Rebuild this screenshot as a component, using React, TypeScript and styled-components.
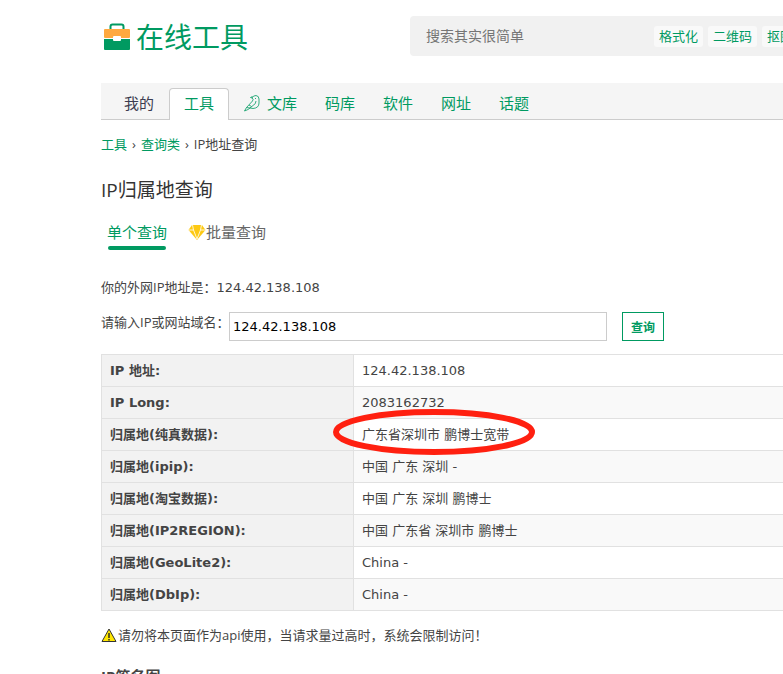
import React from "react";
import styled, { createGlobalStyle, css } from "styled-components";

const sans = `"Open Sans", "Noto Sans CJK SC", sans-serif`;
const wide = `"DejaVu Sans", "Noto Sans CJK SC", sans-serif`;
const green = "#009a61";

const GlobalStyle = createGlobalStyle`
  * { box-sizing: border-box; }
  body { margin: 0; background: #fff; color: #444; font: 13px/20px ${wide}; overflow-x: hidden; }
  #root { height: 100vh; overflow: hidden; }
  a { color: ${green}; text-decoration: none; }
  button, input { font-family: inherit; }
`;

const Page = styled.div`
  padding-left: 101px;
`;

const Header = styled.header`
  display: flex;
  align-items: center;
  height: 83px;
  padding-bottom: 11px;
`;

const Logo = styled.a`
  display: flex;
  flex: none;
  align-items: center;
  gap: 5px;
  width: 309px;
  padding: 2px 0 0 2px;
  font: 28px/36px ${sans};
  white-space: nowrap;
`;

const SearchBar = styled.form`
  display: flex;
  flex: 1;
  align-items: center;
  gap: 5px;
  min-width: 0;
  height: 40px;
  padding-left: 16px;
  border-radius: 4px 0 0 4px;
  background: #f1f1f1;
  overflow: hidden;
`;

const SearchInput = styled.input`
  flex: none;
  width: 223px;
  padding: 0;
  border: 0;
  outline: 0;
  background: transparent;
  font: 14px/20px ${sans};
  &::placeholder { color: #757575; opacity: 1; }
`;

const Chip = styled.a`
  flex: none;
  padding: 0 5px;
  border-radius: 3px;
  background: #f9f9f9;
  font: 13px/21px ${sans};
`;

const Nav = styled.nav`
  display: flex;
  align-items: flex-end;
  height: 37px;
  padding-left: 9px;
  border-bottom: 1px solid #ccc;
  background: #f5f5f5;
`;

const Tab = styled.a<{ $active?: boolean; $dark?: boolean }>`
  display: flex;
  align-items: center;
  gap: 6px;
  height: 32px;
  margin-bottom: -1px;
  padding: 0 13px 3px;
  border: 1px solid transparent;
  border-bottom: 0;
  border-radius: 4px 4px 0 0;
  font: 15px/28px ${sans};
  white-space: nowrap;
  ${(p) => p.$dark && css`color: #3c3c50;`}
  ${(p) => p.$active && css`
    margin-left: 1px;
    padding: 0 14px 3px;
    border-color: #ccc;
    background: #fff;
  `}
`;

const Crumbs = styled.nav`
  display: flex;
  gap: 5px;
  margin-top: 14px;
  font: 13px/20px ${sans};
`;

const Title = styled.h1`
  margin: 22px 0 0;
  color: #333;
  font: 19px/28px ${sans};
`;

const Modes = styled.div`
  display: flex;
  gap: 21px;
  margin-top: 16px;
  padding-left: 6px;
`;

const Mode = styled.button<{ $active?: boolean }>`
  position: relative;
  display: flex;
  align-items: center;
  height: 30px;
  padding: 0 0 6px;
  border: 0;
  background: transparent;
  color: ${(p) => (p.$active ? green : "#666")};
  font: 15px/22px ${sans};
  ${(p) => p.$active && css`
    &::after {
      content: "";
      position: absolute;
      left: 1px;
      right: 1px;
      bottom: 0;
      height: 4px;
      border-radius: 2px;
      background: ${green};
    }
  `}
`;

const Line = styled.p`
  margin: 27px 0 0;
  span { font-family: ${sans}; }
`;

const QueryForm = styled.form`
  display: flex;
  margin-top: 14px;
  label { width: 128px; font-family: ${sans}; white-space: nowrap; }
`;

const AddressInput = styled.input`
  width: 378px;
  height: 29px;
  padding: 0 3px;
  border: 1px solid #ccc;
  color: #000;
  font-size: 13px;
`;

const QueryButton = styled.button`
  width: 42px;
  height: 29px;
  margin-left: 15px;
  padding: 0;
  border: 1px solid ${green};
  background: #fff;
  color: ${green};
  font-size: 12px;
  font-weight: bold;
`;

const Table = styled.table`
  width: 100%;
  margin-top: 13px;
  border-collapse: collapse;
  table-layout: fixed;
  tr:nth-child(even) { background: #f9f9f9; }
  th, td {
    height: 32px;
    padding: 0 8px;
    border: 1px solid #e1e1e1;
    line-height: 20px;
    text-align: left;
  }
  th { width: 252px; background: #f2f2f2; }
  td { position: relative; border-right: 0; }
`;

const Ring = styled.svg`
  position: absolute;
  left: -21px;
  top: -10px;
  pointer-events: none;
`;

const Warning = styled.p`
  display: flex;
  align-items: center;
  gap: 1px;
  margin: 14px 0 0;
  font-family: ${sans};
`;

const Subtitle = styled.h2`
  margin: 19px 0 0;
  font: bold 15px/24px ${sans};
`;

const Briefcase = () => (
  <svg width="28" height="28" viewBox="0 0 28 28" aria-hidden="true">
    <path d="M7.5 7V3.5Q7.5 1.5 9.5 1.5H18.5Q20.5 1.5 20.5 3.5V7" fill="none" stroke={green} strokeWidth="2" />
    <rect x="1" y="6" width="26" height="9" rx="1" fill="#ffa940" />
    <path d="M1 16H27V26Q27 27 26 27H2Q1 27 1 26Z" fill={green} />
    <rect x="10" y="13" width="8" height="5" rx="1" fill="#fff" />
  </svg>
);

const Bird = () => (
  <svg width="18" height="18" viewBox="0 0 18 18" fill="none" stroke={green} strokeWidth="0.8" aria-hidden="true">
    <path d="M9 4Q10 1.5 13 1.5Q16 2 16 5V9Q16 14 10 14.5L7 14" />
    <path d="M9 4Q11 5 9.5 7L3.5 13.5L1.5 17L5 15.5L7 14L10 11.5Q13 10 13 7" />
    <path d="M9 4L7.5 3.5L9.5 2.5M12.5 4V5M3.5 13.5L7 14M6 11L8.5 12.5" />
  </svg>
);

const Gem = () => (
  <svg width="18" height="18" viewBox="0 0 18 18" aria-hidden="true">
    <path d="M4 2H14L17.5 7L9 17L0.5 7Z" fill="#fdc913" />
    <path d="M4.5 2L5.5 7L9 16L12.5 7L13.5 2M1 7H5.5M12.5 7H17" fill="none" stroke="#fff" strokeWidth="0.8" />
  </svg>
);

const Alert = () => (
  <svg width="16" height="16" viewBox="0 0 16 16" aria-hidden="true">
    <path d="M8 2L15 14.5H1Z" fill="#ffe600" stroke="#333" strokeWidth="1" strokeLinejoin="round" />
    <path d="M8 6V11M8 12V13.5" stroke="#222" strokeWidth="1.4" />
  </svg>
);

const rows = [
  ["IP 地址:", "124.42.138.108"],
  ["IP Long:", "2083162732"],
  ["归属地(纯真数据):", "广东省深圳市 鹏博士宽带"],
  ["归属地(ipip):", "中国 广东 深圳 -"],
  ["归属地(淘宝数据):", "中国 广东 深圳 鹏博士"],
  ["归属地(IP2REGION):", "中国 广东省 深圳市 鹏博士"],
  ["归属地(GeoLite2):", "China -"],
  ["归属地(DbIp):", "China -"],
];

export default function App() {
  return (
    <>
      <GlobalStyle />
      <Page>
        <Header>
          <Logo href="#"><Briefcase />在线工具</Logo>
          <SearchBar>
            <SearchInput aria-label="搜索" placeholder="搜索其实很简单" />
            <Chip href="#">格式化</Chip>
            <Chip href="#">二维码</Chip>
            <Chip href="#">抠图</Chip>
          </SearchBar>
        </Header>
        <Nav>
          <Tab href="#" $dark>我的</Tab>
          <Tab href="#" $active>工具</Tab>
          <Tab href="#"><Bird />文库</Tab>
          <Tab href="#">码库</Tab>
          <Tab href="#">软件</Tab>
          <Tab href="#">网址</Tab>
          <Tab href="#">话题</Tab>
        </Nav>
        <Crumbs>
          <a href="#">工具</a><span>›</span><a href="#">查询类</a><span>›</span><span>IP地址查询</span>
        </Crumbs>
        <Title>IP归属地查询</Title>
        <Modes>
          <Mode type="button" $active>单个查询</Mode>
          <Mode type="button"><Gem />批量查询</Mode>
        </Modes>
        <Line><span>你的外网IP地址是：</span>124.42.138.108</Line>
        <QueryForm>
          <label htmlFor="address">请输入IP或网站域名：</label>
          <AddressInput id="address" defaultValue="124.42.138.108" />
          <QueryButton type="button">查询</QueryButton>
        </QueryForm>
        <Table>
          <tbody>
            {rows.map(([name, value], i) => (
              <tr key={name}>
                <th scope="row">{name}</th>
                <td>
                  {value}
                  {i === 2 && (
                    <Ring width="202" height="46" viewBox="0 0 202 46" aria-hidden="true">
                      <ellipse cx="101" cy="23" rx="98" ry="20" fill="none" stroke="#ff2010" strokeWidth="6" />
                    </Ring>
                  )}
                </td>
              </tr>
            ))}
          </tbody>
        </Table>
        <Warning><Alert />请勿将本页面作为api使用，当请求量过高时，系统会限制访问！</Warning>
        <Subtitle>IP签名图</Subtitle>
      </Page>
    </>
  );
}
